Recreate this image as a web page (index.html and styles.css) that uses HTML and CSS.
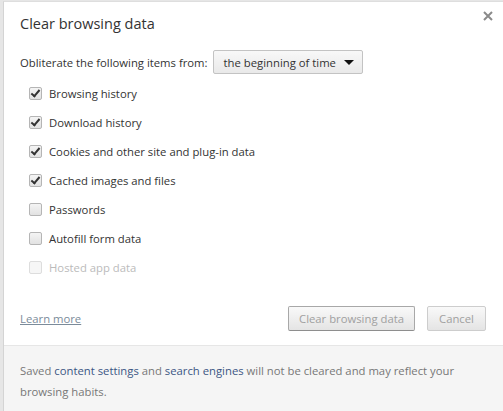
FILE: index.html
```html
<!DOCTYPE html>
<html>
<head>
<meta charset="utf-8">
<link rel="stylesheet" href="styles.css">
</head>
<body>
<div class="dialog">
  <div class="main">
    <div class="header">
      <h1 class="title">Clear browsing data</h1>
      <span class="close">
        <svg width="10" height="10" viewBox="0 0 10 10"><path d="M1 1 L9 9 M9 1 L1 9" stroke="#8a8a8a" stroke-width="2"/></svg>
      </span>
    </div>
    <div class="period">
      <span>Obliterate the following items from:</span>
      <span class="select">the beginning of time<span class="arrow"></span></span>
    </div>
    <ul class="items">
      <li><span class="cb checked"></span>Browsing history</li>
      <li><span class="cb checked"></span>Download history</li>
      <li><span class="cb checked"></span>Cookies and other site and plug-in data</li>
      <li><span class="cb checked"></span>Cached images and files</li>
      <li><span class="cb"></span>Passwords</li>
      <li><span class="cb"></span>Autofill form data</li>
      <li class="disabled"><span class="cb"></span>Hosted app data</li>
    </ul>
    <div class="actions">
      <a class="learn" href="#">Learn more</a>
      <div class="buttons">
        <span class="btn btn-clear">Clear browsing data</span>
        <span class="btn btn-cancel">Cancel</span>
      </div>
    </div>
  </div>
  <div class="footer">
    <p class="note">Saved <a href="#">content settings</a> and <a href="#">search engines</a> will not be cleared and may reflect your browsing habits.</p>
  </div>
</div>
</body>
</html>
```
FILE: styles.css
```css
html, body {
  margin: 0;
  padding: 0;
  height: 100%;
}
body {
  background: #e6e6e6;
  font-family: "Open Sans", "Noto Sans", sans-serif;
  font-size: 11.3px;
  color: #333;
  padding: 1px 0 0 3px;
  box-sizing: border-box;
}
.dialog {
  background: #fff;
  height: 100%;
  border-left: 1px solid #d4d4d4;
  border-top: 1px solid #dedede;
  box-sizing: border-box;
  display: flex;
  flex-direction: column;
}
.main {
  padding: 0 0 0 16px;
  flex: 1;
}
.header {
  display: flex;
  justify-content: space-between;
  align-items: center;
  height: 42px;
}
.title {
  margin: 0;
  font-size: 14.5px;
  font-weight: normal;
  color: #333;
}
.close {
  margin: 0 10px 14px 0;
  display: flex;
}
.period {
  display: flex;
  align-items: center;
  gap: 5px;
  margin-top: 5px;
  height: 26px;
}
.select {
  display: inline-flex;
  align-items: center;
  height: 24px;
  padding: 0 8px 0 10px;
  border: 1px solid #c3c3c3;
  border-radius: 2px;
  background: linear-gradient(#f8f8f8, #e9e9e9);
  box-sizing: border-box;
  color: #333;
}
.arrow {
  width: 0;
  height: 0;
  border-left: 5px solid transparent;
  border-right: 5px solid transparent;
  border-top: 5px solid #111;
  margin-left: 8px;
}
.items {
  list-style: none;
  margin: 4px 0 0 0;
  padding: 0 0 0 9px;
}
.items li {
  display: flex;
  align-items: center;
  height: 29px;
}
.cb {
  width: 13px;
  height: 13px;
  box-sizing: border-box;
  border: 1px solid #b5b5b5;
  border-radius: 2px;
  background: linear-gradient(#f4f4f4, #e2e2e2);
  margin-right: 7px;
  position: relative;
}
.cb.checked::after {
  content: "";
  position: absolute;
  left: 3px;
  top: 0px;
  width: 3px;
  height: 7px;
  border: solid #333;
  border-width: 0 2px 2px 0;
  transform: rotate(40deg);
}
.disabled {
  color: #bbb;
}
.disabled .cb {
  border-color: #ddd;
  background: #f6f6f6;
}
.actions {
  display: flex;
  justify-content: space-between;
  align-items: center;
  margin-top: 24px;
  padding-right: 17px;
}
.learn {
  color: #7b8b9a;
  text-decoration: underline;
}
.buttons {
  display: flex;
  gap: 12px;
}
.btn {
  display: inline-flex;
  align-items: center;
  justify-content: center;
  height: 25px;
  box-sizing: border-box;
  border: 1px solid #bdbdbd;
  border-radius: 2px;
  background: linear-gradient(#f9f9f9, #e4e4e4);
  color: #a0a0a0;
}
.btn-clear {
  width: 127px;
  border-color: #a8a8a8;
  border-bottom-color: #8e8e8e;
}
.btn-cancel {
  width: 59px;
  border-color: #cdcdcd;
}
.footer {
  background: #f5f5f5;
  border-top: 1px solid #e6e6e6;
  height: 66px;
  box-sizing: border-box;
  padding: 14px 20px 0 16px;
  color: #777;
}
.note {
  margin: 0;
  line-height: 21px;
}
.note a {
  color: #3b5584;
  text-decoration: none;
}
```
